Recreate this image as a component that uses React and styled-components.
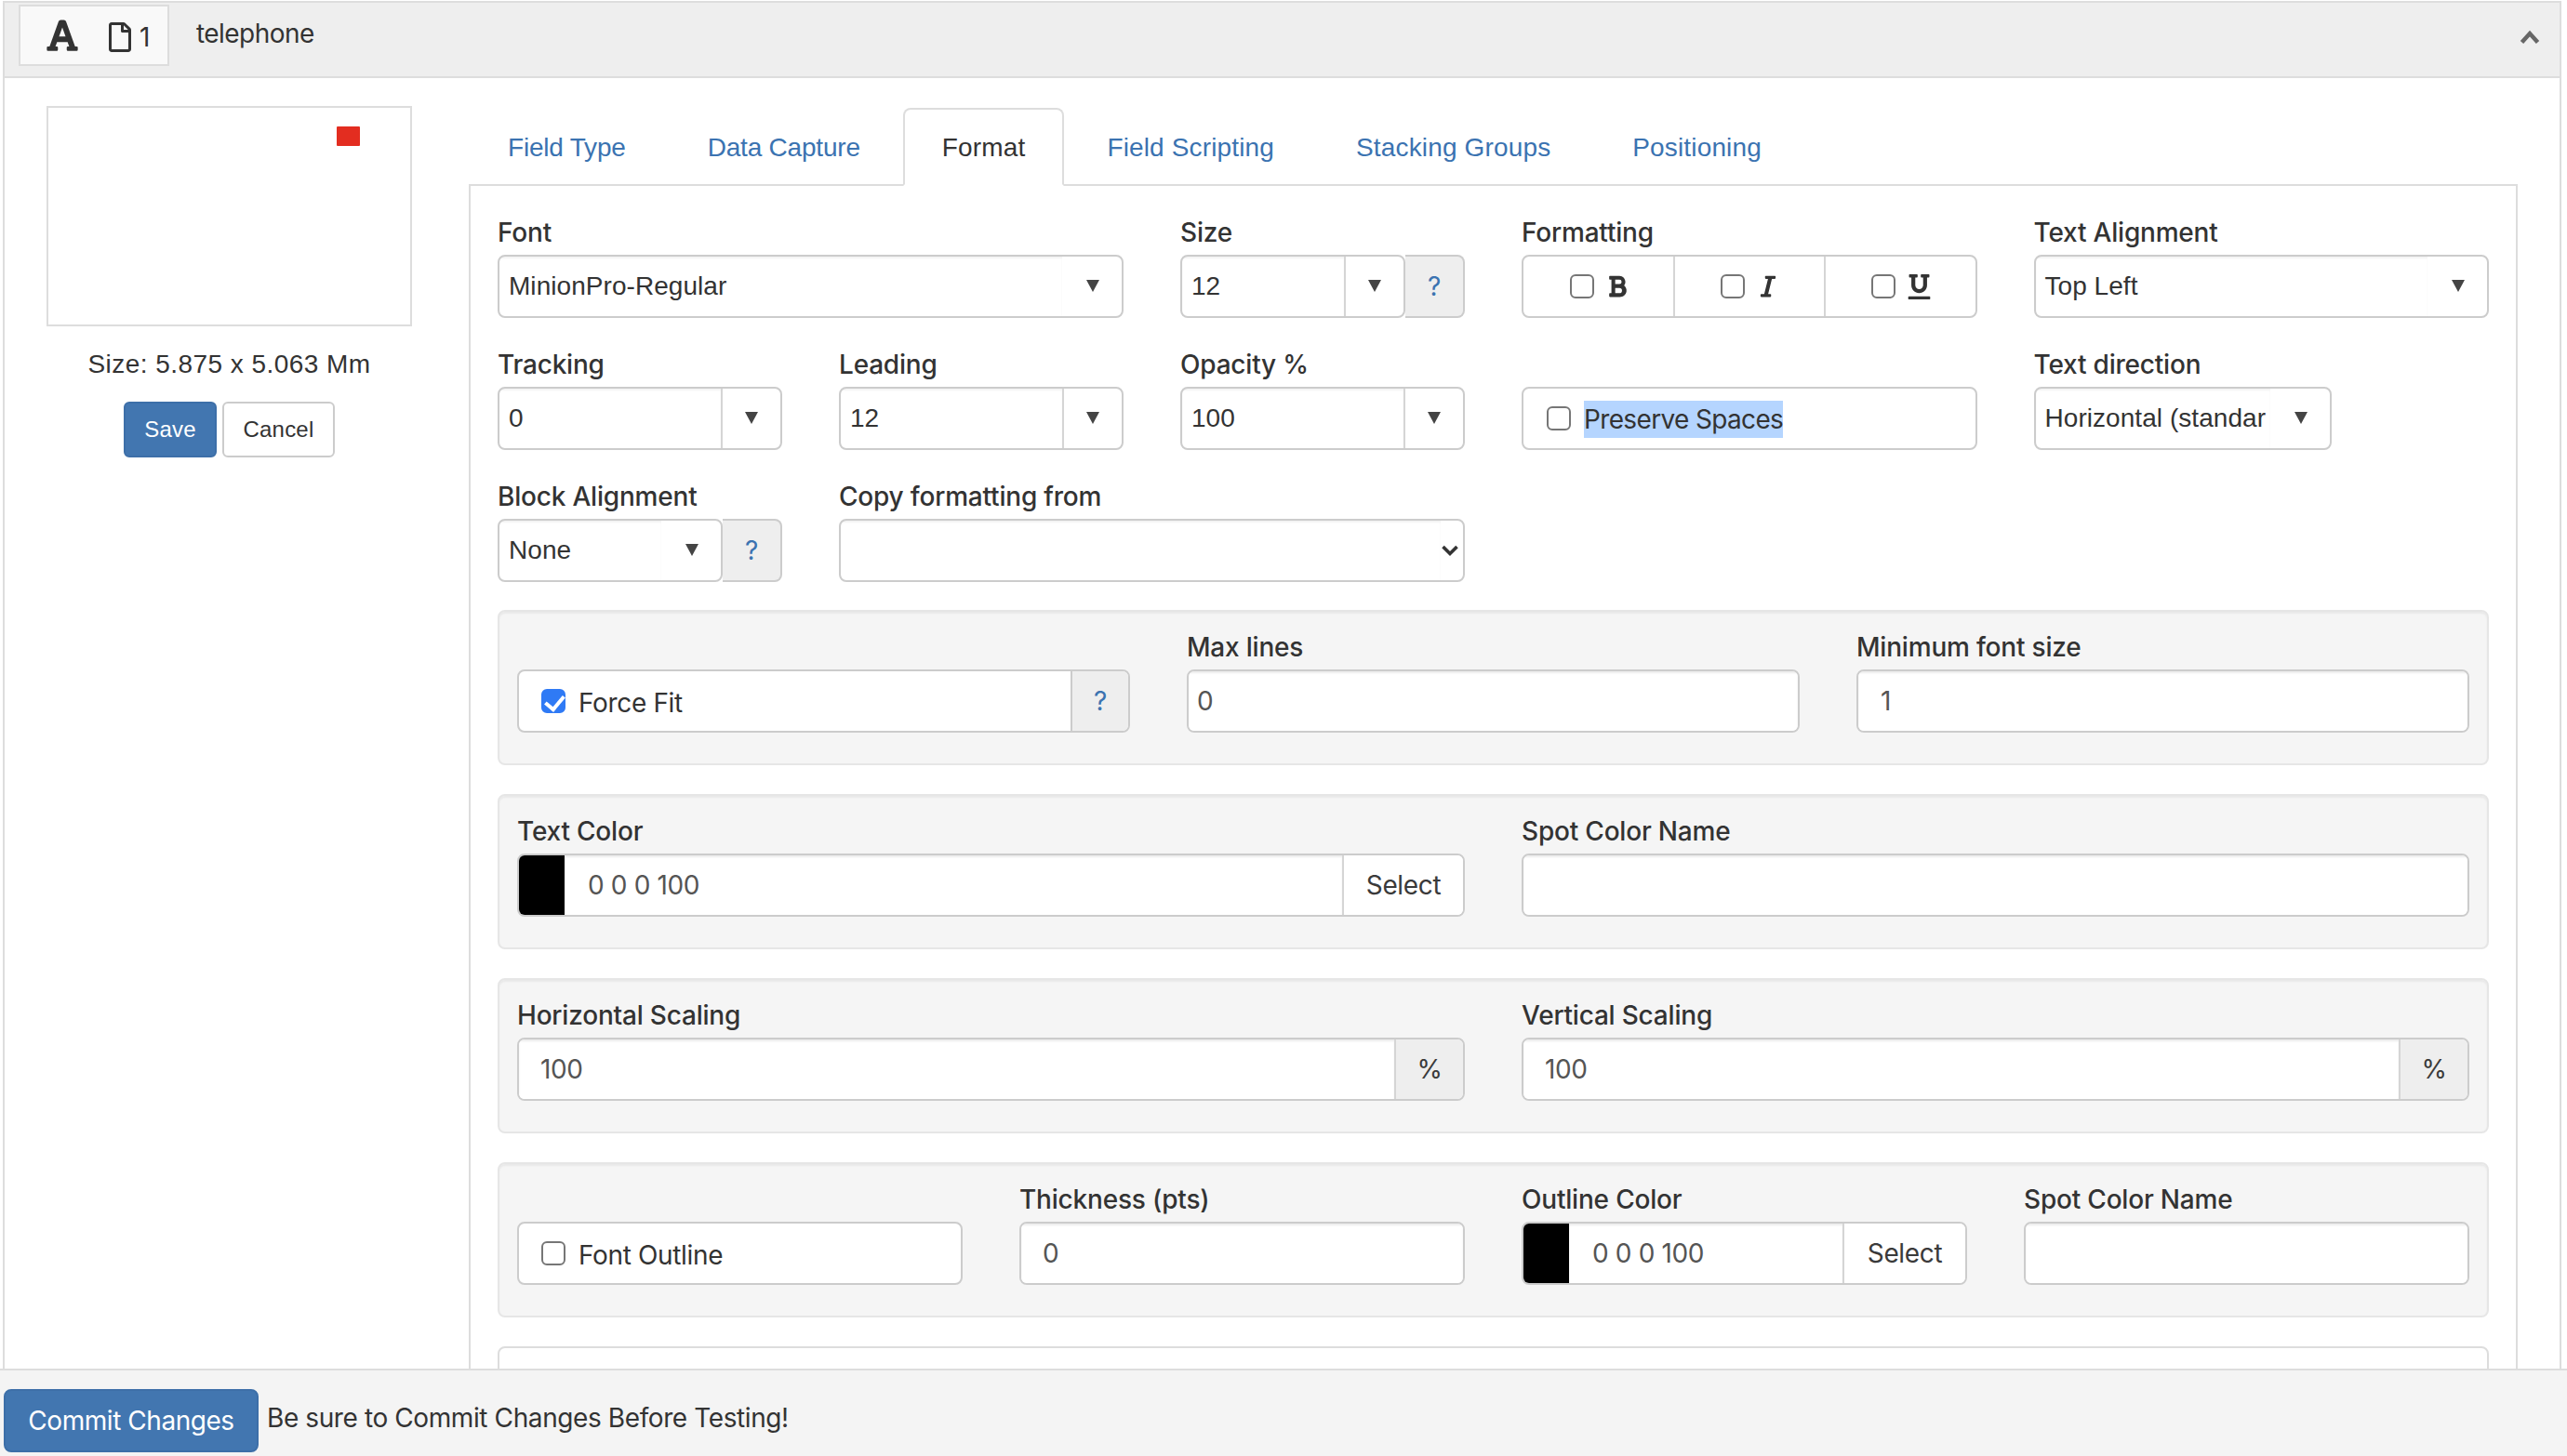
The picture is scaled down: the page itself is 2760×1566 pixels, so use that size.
import React from "react";
import styled, { createGlobalStyle } from "styled-components";
import { FaFont, FaRegFile, FaBold, FaItalic, FaUnderline } from "react-icons/fa";

const Global = createGlobalStyle`
  html, body { margin: 0; padding: 0; background: #fff; }
  body {
    font-family: Inter, "Liberation Sans", sans-serif;
    font-size: 28px;
    color: #333;
    letter-spacing: -0.35px;
    font-variant-ligatures: no-contextual;
    font-feature-settings: "calt" 0;
  }
  * { box-sizing: border-box; }
`;

const Helvetica = `"Liberation Sans", Arial, sans-serif`;

const Page = styled.div`
  height: 1566px;
  overflow: hidden;
  padding: 1px 6px 0 3px;
`;
const Panel = styled.section`
  border: 2px solid #ddd;
  border-bottom: 0;
`;
const PanelHeader = styled.header`
  height: 81px;
  background: #eee;
  border-bottom: 2px solid #ddd;
  display: flex;
  align-items: flex-start;
  padding: 2px 19px 0 15px;
`;
const Badge = styled.div`
  width: 162px;
  height: 66px;
  background: #f9f9f9;
  border: 2px solid #ddd;
  display: flex;
  align-items: center;
  padding-left: 26px;
  color: #333;
`;
const PageCount = styled.span`
  display: flex;
  align-items: center;
  margin-left: 27px;
  font-size: 28px;
  line-height: 32px;
  margin-top: 4px;
  gap: 5px;
`;
const Title = styled.div`
  margin-left: 29px;
  line-height: 60px;
  flex: 1;
  letter-spacing: -0.55px;
  padding-top: 1px;
`;
const Collapse = styled.svg`
  width: 22px;
  height: 18px;
  margin-top: 26px;
  margin-right: 2px;
  color: #666;
`;
const Body = styled.div`
  display: grid;
  grid-template-columns: 393px 1fr;
  column-gap: 61px;
  padding: 30px 45px 0;
`;
const Sidebar = styled.aside`
  display: flex;
  flex-direction: column;
  align-items: center;
`;
const Preview = styled.div`
  position: relative;
  width: 393px;
  height: 237px;
  border: 2px solid #ddd;
  background: #fff;
`;
const Marker = styled.div`
  position: absolute;
  left: 310px;
  top: 20px;
  width: 25px;
  height: 21px;
  background: #e32d20;
  border-radius: 1px;
`;
const SizeText = styled.div`
  margin-top: 21px;
  line-height: 40px;
  font-family: ${Helvetica};
  letter-spacing: 0.45px;
`;
const Actions = styled.div`
  display: flex;
  gap: 6px;
  margin-top: 20px;
`;
const SmallButton = styled.button`
  height: 60px;
  width: ${(p) => p.$w}px;
  padding: 0;
  font-family: ${Helvetica};
  font-size: 24px;
  letter-spacing: 0.2px;
  border-radius: 6px;
  border: 2px solid ${(p) => (p.$primary ? "#3d6fa8" : "#ccc")};
  background: ${(p) => (p.$primary ? "#4276b0" : "#fff")};
  color: ${(p) => (p.$primary ? "#fff" : "#333")};
`;
const Main = styled.main`
  padding-top: 2px;
`;
const Tabs = styled.nav`
  display: flex;
  gap: 4px;
  height: 84px;
  margin-bottom: -2px;
  position: relative;
`;
const Tab = styled.a`
  display: flex;
  align-items: center;
  height: 84px;
  padding: 2px 40px 0;
  font-family: ${Helvetica};
  letter-spacing: ${(p) => (p.$tight ? "-0.2px" : "0.15px")};
  border: 2px solid ${(p) => (p.$active ? "#ddd" : "transparent")};
  border-bottom-color: ${(p) => (p.$active ? "#fff" : "transparent")};
  border-radius: 8px 8px 0 0;
  background: ${(p) => (p.$active ? "#fff" : "transparent")};
  color: ${(p) => (p.$active ? "#333" : "#3b73b1")};
`;
const Pane = styled.div`
  border: 2px solid #ddd;
  border-bottom: 0;
  padding: 30px 29px 0;
`;
const FormGrid = styled.div`
  display: grid;
  grid-template-columns: repeat(12, 1fr);
  column-gap: 61px;
  row-gap: 30px;
`;
const Group = styled.div`
  grid-column: span ${(p) => p.$span};
  min-width: 0;
`;
const Label = styled.label`
  display: block;
  height: 40px;
  line-height: 40px;
  margin-bottom: 4px;
  font-weight: 500;
  letter-spacing: -0.2px;
  white-space: nowrap;
`;
const Well = styled.div`
  margin-top: ${(p) => p.$mt || 31}px;
  height: ${(p) => (p.$open ? "140px" : "167px")};
  background: ${(p) => (p.$open ? "#fff" : "#f5f5f5")};
  border: 2px solid ${(p) => (p.$open ? "#ddd" : "#e6e6e6")};
  border-radius: 8px;
  box-shadow: ${(p) => (p.$open ? "none" : "inset 0 2px 2px rgba(0,0,0,.05)")};
  padding: 18px 19px 0;
  display: grid;
  grid-template-columns: repeat(${(p) => p.$cols || 1}, 1fr);
  column-gap: 61px;
  align-items: start;
`;
const Box = styled.div`
  display: flex;
  align-items: stretch;
  height: 68px;
  width: ${(p) => (p.$w ? `${p.$w}px` : "100%")};
  flex: ${(p) => (p.$grow ? 1 : "none")};
  min-width: 0;
  background: #fff;
  border: 2px solid #ccc;
  border-radius: 8px;
  overflow: hidden;
`;
const Joined = styled.div`
  display: flex;
  height: 68px;
`;
const TextField = styled.input`
  flex: 1;
  min-width: 0;
  height: 100%;
  width: 100%;
  border: 0;
  outline: 0;
  font: inherit;
  letter-spacing: inherit;
  color: #555;
  padding: 0 0 0 ${(p) => p.$pad}px;
  background: #fff;
  box-shadow: inset 0 2px 2px rgba(0, 0, 0, 0.075);
`;
const Value = styled.div`
  flex: 1;
  min-width: 0;
  display: flex;
  align-items: center;
  padding-left: 10px;
  overflow: hidden;
  white-space: nowrap;
  font-family: ${Helvetica};
  letter-spacing: 0.05px;
  color: #333;
  box-shadow: inset 0 2px 2px rgba(0, 0, 0, 0.05);
`;
const ArrowCell = styled.div`
  flex: none;
  width: 64px;
  display: flex;
  align-items: center;
  justify-content: center;
  border-left: 2px solid ${(p) => (p.$plain ? "transparent" : "#d5d5d5")};
  &::after {
    content: "";
    border-left: 7px solid transparent;
    border-right: 7px solid transparent;
    border-top: 13px solid #444;
    margin-top: -2px;
  }
`;
const ChevronCell = styled.div`
  flex: none;
  width: 24px;
  display: flex;
  align-items: center;
  color: #333;
`;
const Help = styled.div`
  flex: none;
  width: ${(p) => p.$w}px;
  display: flex;
  align-items: center;
  justify-content: center;
  background: #eee;
  color: #3b73b1;
  border: 2px solid #ccc;
  border-left: 0;
  border-radius: 0 8px 8px 0;
`;
const InnerHelp = styled.div`
  flex: none;
  width: 62px;
  display: flex;
  align-items: center;
  justify-content: center;
  background: #eee;
  color: #3b73b1;
  border-left: 2px solid #ccc;
`;
const Addon = styled.div`
  flex: none;
  width: ${(p) => p.$w}px;
  display: flex;
  align-items: center;
  justify-content: center;
  border-left: 2px solid #d5d5d5;
  background: ${(p) => (p.$shade ? "#eee" : "#fff")};
  color: #3a3a3a;
`;
const Check = styled.input.attrs({ type: "checkbox" })`
  appearance: none;
  flex: none;
  position: relative;
  width: 26px;
  height: 26px;
  margin: 0;
  background: #fff;
  border: 2.5px solid #767676;
  border-radius: 6px;
  &:checked {
    background: #2f7af5;
    border-color: #2f7af5;
  }
  &:checked::after {
    content: "";
    position: absolute;
    left: 6px;
    top: 1px;
    width: 9px;
    height: 16px;
    border: solid #fff;
    border-width: 0 4px 4px 0;
    transform: rotate(40deg);
  }
`;
const CheckRow = styled.div`
  flex: 1;
  display: flex;
  align-items: center;
  gap: 14px;
  padding-left: ${(p) => p.$pad || 24}px;
  color: #333;
`;
const CheckText = styled.span`
  margin-top: 4px;
`;
const Highlight = styled.span`
  display: block;
  height: 40px;
  line-height: 40px;
  margin-top: 2px;
  background: #b5d5ff;
  letter-spacing: -0.65px;
  white-space: nowrap;
`;
const FormatCell = styled.div`
  flex: 1;
  display: flex;
  align-items: center;
  justify-content: center;
  gap: 12px;
  padding-left: 3px;
  color: #333;
  & + & {
    border-left: 2px solid #d5d5d5;
  }
`;
const Swatch = styled.div`
  flex: none;
  width: 49px;
  background: #000;
`;
const Footer = styled.footer`
  position: fixed;
  left: 0;
  right: 0;
  bottom: 0;
  height: 94px;
  background: #f4f4f4;
  border-top: 2px solid #ddd;
  display: flex;
  align-items: flex-start;
  gap: 9px;
  padding: 20px 0 0 4px;
`;
const CommitButton = styled.button`
  width: 274px;
  height: 68px;
  padding: 0;
  font: inherit;
  letter-spacing: -0.45px;
  color: #fff;
  background: #4276b0;
  border: 2px solid #3d6fa8;
  border-radius: 8px;
`;
const FooterNote = styled.div`
  margin-top: 11px;
  line-height: 40px;
  letter-spacing: -0.4px;
`;

const Combo = ({ value, w, plain, grow }) => (
  <Box $w={w} $grow={grow}>
    <Value>{value}</Value>
    <ArrowCell $plain={plain} />
  </Box>
);

const Text = ({ value = "", pad = 11 }) => (
  <Box>
    <TextField readOnly value={value} $pad={pad} />
  </Box>
);

const Measure = ({ value }) => (
  <Box>
    <TextField readOnly value={value} $pad={23} />
    <Addon $w={74} $shade>%</Addon>
  </Box>
);

const Color = ({ select = 130 }) => (
  <Box>
    <Swatch />
    <TextField readOnly value="0 0 0 100" $pad={25} />
    <Addon $w={select}>Select</Addon>
  </Box>
);

export default function App() {
  return (
    <Page>
      <Global />
      <Panel>
        <PanelHeader>
          <Badge>
            <FaFont size={38} />
            <PageCount>
              <FaRegFile size={32} />1
            </PageCount>
          </Badge>
          <Title>telephone</Title>
          <Collapse viewBox="0 0 22 18" fill="none">
            <path d="M2.5 14.5 11 5l8.5 9.5" stroke="currentColor" strokeWidth="4.5" />
          </Collapse>
        </PanelHeader>
        <Body>
          <Sidebar>
            <Preview>
              <Marker />
            </Preview>
            <SizeText>Size: 5.875 x 5.063 Mm</SizeText>
            <Actions>
              <SmallButton $primary $w={100}>Save</SmallButton>
              <SmallButton $w={121}>Cancel</SmallButton>
            </Actions>
          </Sidebar>
          <Main>
            <Tabs>
              <Tab $tight>Field Type</Tab>
              <Tab $tight>Data Capture</Tab>
              <Tab $active>Format</Tab>
              <Tab>Field Scripting</Tab>
              <Tab>Stacking Groups</Tab>
              <Tab>Positioning</Tab>
            </Tabs>
            <Pane>
              <FormGrid>
                <Group $span={4}>
                  <Label>Font</Label>
                  <Combo value="MinionPro-Regular" plain />
                </Group>
                <Group $span={2}>
                  <Label>Size</Label>
                  <Joined>
                    <Combo value="12" grow />
                    <Help $w={64}>?</Help>
                  </Joined>
                </Group>
                <Group $span={3}>
                  <Label>Formatting</Label>
                  <Box>
                    <FormatCell><Check /><FaBold size={26} /></FormatCell>
                    <FormatCell><Check /><FaItalic size={26} /></FormatCell>
                    <FormatCell><Check /><FaUnderline size={27} /></FormatCell>
                  </Box>
                </Group>
                <Group $span={3}>
                  <Label>Text Alignment</Label>
                  <Combo value="Top Left" plain />
                </Group>

                <Group $span={2}>
                  <Label>Tracking</Label>
                  <Combo value="0" />
                </Group>
                <Group $span={2}>
                  <Label>Leading</Label>
                  <Combo value="12" />
                </Group>
                <Group $span={2}>
                  <Label>Opacity %</Label>
                  <Combo value="100" />
                </Group>
                <Group $span={3}>
                  <Label>&nbsp;</Label>
                  <Box>
                    <CheckRow $pad={25}><Check /><Highlight>Preserve Spaces</Highlight></CheckRow>
                  </Box>
                </Group>
                <Group $span={3}>
                  <Label>Text direction</Label>
                  <Combo value="Horizontal (standar" w={320} plain />
                </Group>

                <Group $span={2}>
                  <Label>Block Alignment</Label>
                  <Joined>
                    <Combo value="None" grow plain />
                    <Help $w={64}>?</Help>
                  </Joined>
                </Group>
                <Group $span={4}>
                  <Label>Copy formatting from</Label>
                  <Box>
                    <Value />
                    <ChevronCell>
                      <svg width="20" height="14" viewBox="0 0 20 14" fill="none">
                        <path d="M2.5 3 10 10.5 17.5 3" stroke="currentColor" strokeWidth="3.6" />
                      </svg>
                    </ChevronCell>
                  </Box>
                </Group>
              </FormGrid>

              <Well $cols={3} $mt={30}>
                <Group>
                  <Label>&nbsp;</Label>
                  <Box>
                    <CheckRow><Check defaultChecked /><CheckText>Force Fit</CheckText></CheckRow>
                    <InnerHelp>?</InnerHelp>
                  </Box>
                </Group>
                <Group>
                  <Label>Max lines</Label>
                  <Text value="0" pad={9} />
                </Group>
                <Group>
                  <Label>Minimum font size</Label>
                  <Text value="1" pad={24} />
                </Group>
              </Well>

              <Well $cols={2}>
                <Group>
                  <Label>Text Color</Label>
                  <Color />
                </Group>
                <Group>
                  <Label>Spot Color Name</Label>
                  <Text />
                </Group>
              </Well>

              <Well $cols={2}>
                <Group>
                  <Label>Horizontal Scaling</Label>
                  <Measure value="100" />
                </Group>
                <Group>
                  <Label>Vertical Scaling</Label>
                  <Measure value="100" />
                </Group>
              </Well>

              <Well $cols={4}>
                <Group>
                  <Label>&nbsp;</Label>
                  <Box>
                    <CheckRow><Check /><CheckText>Font Outline</CheckText></CheckRow>
                  </Box>
                </Group>
                <Group>
                  <Label>Thickness (pts)</Label>
                  <Text value="0" pad={23} />
                </Group>
                <Group>
                  <Label>Outline Color</Label>
                  <Color select={132} />
                </Group>
                <Group>
                  <Label>Spot Color Name</Label>
                  <Text />
                </Group>
              </Well>

              <Well $open />
            </Pane>
          </Main>
        </Body>
      </Panel>
      <Footer>
        <CommitButton>Commit Changes</CommitButton>
        <FooterNote>Be sure to Commit Changes Before Testing!</FooterNote>
      </Footer>
    </Page>
  );
}
